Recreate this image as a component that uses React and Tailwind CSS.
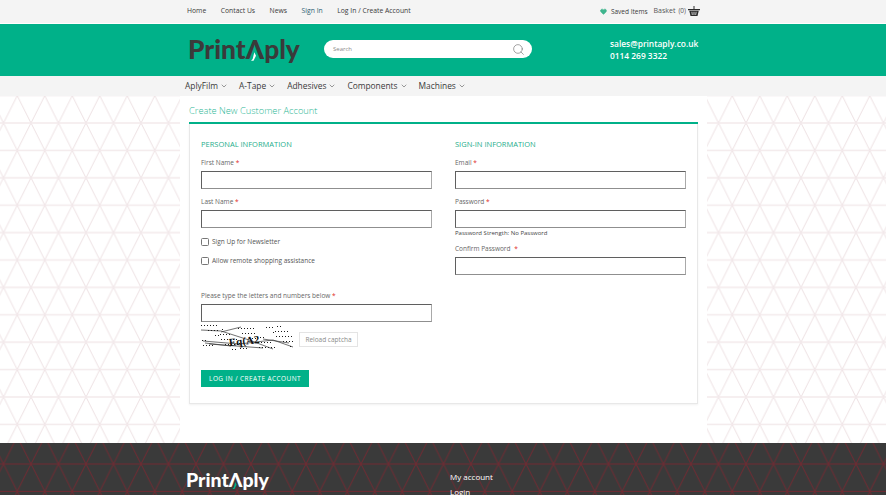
import { ChevronDown, Heart, Search } from "lucide-react"

const topLinks = [
  { label: "Home", className: "text-[#3a3a3a]" },
  { label: "Contact Us", className: "text-[#3a3a3a]" },
  { label: "News", className: "text-[#3a3a3a]" },
  { label: "Sign In", className: "text-[#2f5d73]" },
  { label: "Log In / Create Account", className: "text-[#3a3a3a]" },
]

const navLinks = ["AplyFilm", "A-Tape", "Adhesives", "Components", "Machines"]

// speckle for the captcha, fixed so the picture doesn't change between loads
const captchaDots = Array.from({ length: 90 }, (_, i) => ({
  x: (i * 37) % 92,
  y: (i * 23 + (i % 7) * 5) % 25,
}))

function TrianglePattern({ id, diagonal, line, lineWidth, offsetY }) {
  return (
    <svg className="absolute inset-0 h-full w-full" aria-hidden="true">
      <defs>
        <pattern
          id={id}
          width="27.5"
          height="54.8"
          patternUnits="userSpaceOnUse"
          patternTransform={`translate(3.5 ${offsetY})`}
        >
          <path d="M0 0L13.75 27.4L27.5 0M0 54.8L13.75 27.4L27.5 54.8" fill="none" stroke={diagonal} strokeWidth="1" />
          <path d="M0 0H27.5M0 27.4H27.5M0 54.8H27.5" fill="none" stroke={line} strokeWidth={lineWidth} />
        </pattern>
      </defs>
      <rect width="100%" height="100%" fill={`url(#${id})`} />
    </svg>
  )
}

function Logo({ dark, small }) {
  const color = dark ? "text-[#3a3a3a]" : "text-white"
  const size = small ? "text-[19.500px]" : "text-[26.300px]"
  return (
    <div className={`flex items-baseline font-['Lato',sans-serif] font-black leading-none ${size} ${color}`}>
      <span>Print</span>
      <span className="relative">
        Λ
        <svg viewBox="0 0 6 10" className={`absolute bottom-[1px] ${small ? "left-[3px] h-[7px] w-[5px]" : "left-[5px] h-[9px] w-[5px]"}`}>
          <path d="M4 0L6 4L3 10H0L2 8Z" fill={dark ? "#ffffff" : "#00b189"} />
        </svg>
      </span>
      <span>ply</span>
    </div>
  )
}

function BasketIcon() {
  return (
    <svg viewBox="0 0 24 20" className="h-[10px] w-[12px]" fill="#2b2b2b">
      <path d="M11 0h2v7h-2z" />
      <path d="M0 6h24v2.5H0z" />
      <path d="M2.5 9.5h19L19 20H5zM7 11.5l.8 6.5h1.4L8.6 11.5zM11.2 11.5V18h1.6v-6.5zM15.4 11.5L14.800 18h1.400l.8-6.500z" fillRule="evenodd" />
    </svg>
  )
}

function Field({ label, className = "", gapClass = "" }) {
  return (
    <div className={className}>
      <label className="block text-[6.500px] leading-[10px] text-[#666666]">
        {label} <span className={`text-[#e02b27] ${gapClass}`}>*</span>
      </label>
      <input type="text" className="mt-[3px] block h-[18px] w-full border border-[#5f5f5f] border-r-[#a9a9a9] border-b-[#8f8f8f] bg-white" />
    </div>
  )
}

function CheckRow({ label, className = "" }) {
  return (
    <label className={`flex items-center gap-[3px] text-[6.500px] leading-[10px] text-[#555555] ${className}`}>
      <span className="h-[8px] w-[8px] rounded-[1.500px] border border-[#767676] bg-white" />
      {label}
    </label>
  )
}

function Captcha() {
  return (
    <svg viewBox="0 0 92 25" className="h-[25px] w-[92px]" aria-label="captcha">
      <path d="M0 5L20 6L48 15L72 24M2 16L38 19L72 15L92 22M8 19L62 23M20 7L40 2M62 14L88 18M4 18L30 21" fill="none" stroke="#333333" strokeWidth="0.7" />
      {captchaDots.map((dot, i) => (
        <rect key={i} x={dot.x} y={dot.y} width="1" height="1" fill="#1a1a1a" />
      ))}
      <text x="28" y="20" fontFamily="Liberation Serif, serif" fontSize="11" fontWeight="700" fill="#111111" transform="rotate(-6 40 18)">
        Eq(A2
      </text>
    </svg>
  )
}

export default function App() {
  return (
    <div className="h-[495px] w-[886px] overflow-hidden bg-white font-['Open_Sans',sans-serif]">
      <div className="flex h-[23px] items-center justify-between bg-[#f4f4f4] pb-[1px] pl-[187px] pr-[186px]">
        <nav className="flex gap-[14.500px] text-[6.800px] font-medium">
          {topLinks.map((link) => (
            <a key={link.label} className={link.className}>
              {link.label}
            </a>
          ))}
        </nav>
        <div className="flex items-center text-[#555555]">
          <Heart className="h-[7px] w-[7px] fill-[#3fb58e] text-[#3fb58e]" />
          <span className="ml-[4px] mt-[1px] text-[6.500px] text-[#3a3a3a]">Saved Items</span>
          <span className="ml-[6px] text-[7px]">Basket</span>
          <span className="ml-[3px] text-[6.500px]">(0)</span>
          <span className="ml-[2px]">
            <BasketIcon />
          </span>
        </div>
      </div>

      <header className="mt-px flex h-[52px] items-center bg-[#00b189] pl-[188px] pb-[2px]">
        <div className="w-[136px]">
          <Logo dark />
        </div>
        <div className="flex h-[18px] w-[208px] items-center justify-between rounded-full bg-white pl-[9px] pr-[7px]">
          <span className="text-[6px] text-[#8a8a8a]">Search</span>
          <Search className="h-[13px] w-[13px] text-[#666666]" strokeWidth={1.1} />
        </div>
        <div className="ml-[78px] mt-[2px] text-[8.400px] font-semibold leading-[12px] text-white">
          <div>sales@printaply.co.uk</div>
          <div>0114 269 3322</div>
        </div>
      </header>

      <nav className="flex h-[20px] items-center gap-[11px] bg-[#f4f4f4] pl-[185px] text-[8.400px] text-[#3a3a3a]">
        {navLinks.map((link) => (
          <a key={link} className="flex items-center gap-[2px]">
            {link}
            <ChevronDown className="h-[8px] w-[8px] text-[#3a3a3a]" strokeWidth={1.5} />
          </a>
        ))}
      </nav>

      <main className="relative h-[347px]">
        <TrianglePattern id="main-tri" diagonal="#eee2e4" line="#f3eaec" lineWidth="1.6" offsetY={27} />
        <div className="relative ml-[180px] h-full w-[527px] bg-white px-[9px]">
          <h1 className="pt-[8px] text-[9.300px] font-light leading-[13px] text-[#2fb897]">Create New Customer Account</h1>
          <div className="mt-[5px] h-[2px] bg-[#00b189]" />
          <div className="h-[280px] w-[509px] border-x border-b border-[#e8e8e8] px-[11px] shadow-[0_1px_2px_rgba(0,0,0,0.06)]">
            <div className="flex gap-[23px]">
              <section className="w-[231px]">
                <h2 className="pt-[15px] text-[7.500px] leading-[11px] text-[#1fae8c]">PERSONAL INFORMATION</h2>
                <Field label="First Name" className="mt-[8px]" />
                <Field label="Last Name" className="mt-[8px]" />
                <CheckRow label="Sign Up for Newsletter" className="mt-[9px]" />
                <CheckRow label="Allow remote shopping assistance" className="mt-[9px]" />
                <Field label="Please type the letters and numbers below" className="mt-[25px]" />
                <div className="mt-[3px] flex items-center gap-[6px]">
                  <Captcha />
                  <button type="button" className="mt-[4px] h-[15px] w-[59px] border border-[#e4e4e4] bg-white text-[6.500px] text-[#8a8a8a]">
                    Reload captcha
                  </button>
                </div>
                <button type="button" className="mt-[20px] h-[17px] w-[108px] bg-[#00b189] text-[6.500px] font-medium tracking-[0.4px] text-white">
                  LOG IN / CREATE ACCOUNT
                </button>
              </section>
              <section className="w-[231px]">
                <h2 className="pt-[15px] text-[7.500px] leading-[11px] text-[#1fae8c]">SIGN-IN INFORMATION</h2>
                <Field label="Email" className="mt-[8px]" />
                <Field label="Password" className="mt-[8px]" />
                <p className="mt-[1px] text-[6px] leading-[8px] text-[#444444]">Password Strength: No Password</p>
                <Field label="Confirm Password" gapClass="ml-[2px]" className="mt-[7px]" />
              </section>
            </div>
          </div>
        </div>
      </main>

      <footer className="relative h-[52px] bg-[#3a3a3a]">
        <TrianglePattern id="foot-tri" diagonal="#6f2a32" line="#6f2a32" lineWidth="1" offsetY={21} />
        <div className="relative flex pl-[186px] pt-[27px]">
          <div className="w-[264px]">
            <Logo small />
          </div>
          <div className="text-[8px] leading-[14.500px] text-white">
            <a className="block">My account</a>
            <a className="block">Login</a>
          </div>
        </div>
      </footer>
    </div>
  )
}
